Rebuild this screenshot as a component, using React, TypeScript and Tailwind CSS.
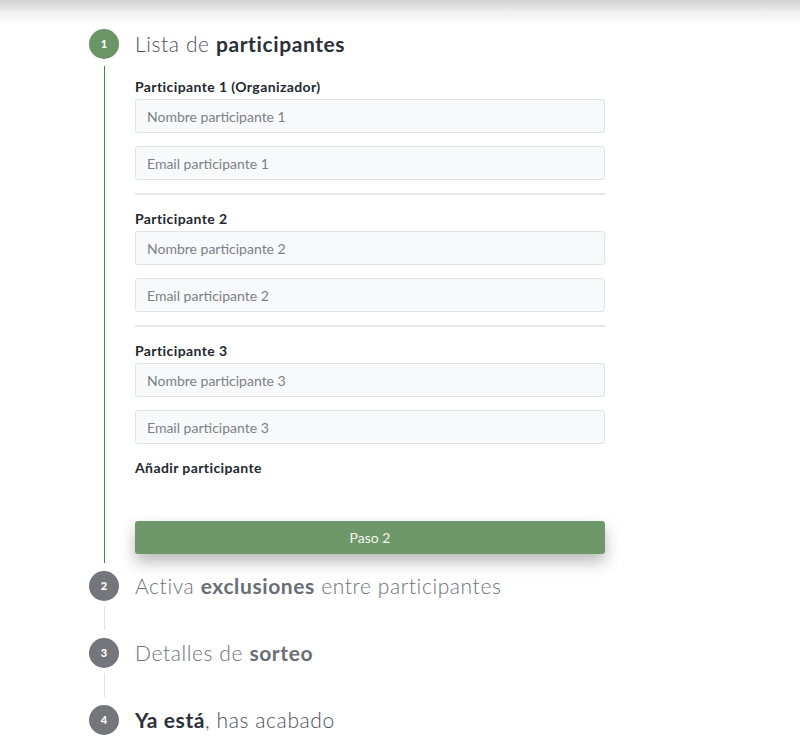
import React from "react";

const font = { fontFamily: "Lato, 'Open Sans', 'Liberation Sans', sans-serif" };

function Field({ placeholder }: { placeholder: string }) {
  return (
    <input
      placeholder={placeholder}
      className="block w-[470px] h-[34px] rounded-[3px] border border-[#dfe2e6] bg-[#f8f9fa] px-[11px] text-[14px] text-[#333] placeholder:text-[#7b8087] outline-none"
      style={font}
    />
  );
}

function Group({ label, n, sep }: { label: string; n: number; sep: boolean }) {
  return (
    <div>
      <div className="h-[20px] leading-[20px] text-[14px] tracking-[0.4px] font-bold text-[#23272e]">{label}</div>
      <div className="mt-[2px]">
        <Field placeholder={`Nombre participante ${n}`} />
      </div>
      <div className="mt-[13px]">
        <Field placeholder={`Email participante ${n}`} />
      </div>
      {sep && <div className="mt-[13px] mb-[14px] h-[2px] w-[470px] bg-[#e6e7e9]" />}
    </div>
  );
}

function Circle({ n, active }: { n: number; active?: boolean }) {
  return (
    <div
      className={`flex h-[30px] w-[30px] shrink-0 items-center justify-center rounded-full text-[11px] font-black text-white ${
        active ? "bg-[#6b9467]" : "bg-[#75767b]"
      }`}
    >
      {n}
    </div>
  );
}

export default function App() {
  return (
    <div className="min-h-[746px] bg-white" style={font}>
      <div className="h-[25px] bg-gradient-to-b from-[#cfcfcf] via-[#f1f1f1] to-white" />
      <div className="pl-[89px] pt-[4px]">
        {/* Step 1 */}
        <div className="flex items-center gap-[16px]">
          <Circle n={1} active />
          <div className="text-[21px] tracking-[0.6px] leading-[30px] text-[#4b5058] font-light">
            Lista de <span className="font-bold text-[#2a2f39]">participantes</span>
          </div>
        </div>
        <div className="ml-[15px] mt-[7px] mb-[8px] border-l border-[#3d8b3d] pl-[30px] pt-[11px] pb-[9px]">
          <Group label="Participante 1 (Organizador)" n={1} sep />
          <Group label="Participante 2" n={2} sep />
          <Group label="Participante 3" n={3} sep={false} />
          <div className="mt-[14px] h-[20px] leading-[20px] text-[14px] tracking-[0.4px] font-bold text-[#23272e]">
            Añadir participante
          </div>
          <button
            className="mt-[43px] block h-[33px] w-[470px] rounded-[3px] bg-[#6e976a] text-[14px] text-[#eef6ea] shadow-[0_8px_16px_rgba(0,0,0,0.28)]"
            style={font}
          >
            Paso 2
          </button>
        </div>

        {/* Step 2 */}
        <div className="flex items-center gap-[16px]">
          <Circle n={2} />
          <div className="text-[21px] tracking-[0.6px] leading-[30px] text-[#6d7178] font-light">
            Activa <span className="font-bold text-[#6a6e75]">exclusiones</span> entre participantes
          </div>
        </div>
        <div className="ml-[15px] mt-[5px] mb-[8px] h-[24px] border-l border-[#e2e2e2]" />

        {/* Step 3 */}
        <div className="flex items-center gap-[16px]">
          <Circle n={3} />
          <div className="text-[21px] tracking-[0.6px] leading-[30px] text-[#6d7178] font-light">
            Detalles de <span className="font-bold text-[#6a6e75]">sorteo</span>
          </div>
        </div>
        <div className="ml-[15px] mt-[5px] mb-[8px] h-[24px] border-l border-[#e2e2e2]" />

        {/* Step 4 */}
        <div className="flex items-center gap-[16px]">
          <Circle n={4} />
          <div className="text-[21px] tracking-[0.6px] leading-[30px] text-[#4b5058] font-light">
            <span className="font-bold text-[#2a2f39]">Ya está</span>, has acabado
          </div>
        </div>
      </div>
    </div>
  );
}
